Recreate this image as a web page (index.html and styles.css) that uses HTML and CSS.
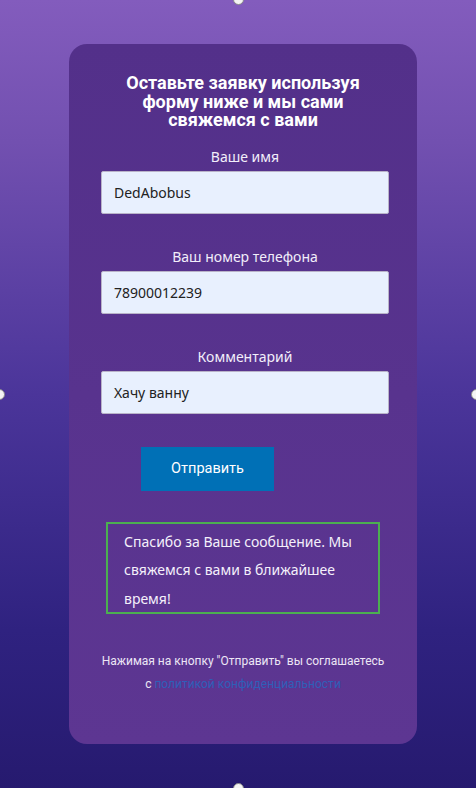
FILE: index.html
```html
<!DOCTYPE html>
<html lang="ru">
<head>
<meta charset="utf-8">
<link rel="stylesheet" href="styles.css">
</head>
<body>
<div class="page">
  <form class="card">
    <h2 class="title">Оставьте заявку используя форму ниже и мы сами свяжемся с вами</h2>
    <div class="field">
      <label class="label">Ваше имя</label>
      <div class="input">DedAbobus</div>
    </div>
    <div class="field">
      <label class="label">Ваш номер телефона</label>
      <div class="input">78900012239</div>
    </div>
    <div class="field">
      <label class="label">Комментарий</label>
      <div class="input">Хачу ванну</div>
    </div>
    <div class="btn-row"><button type="button" class="btn">Отправить</button></div>
    <div class="msg">Спасибо за Ваше сообщение. Мы свяжемся с вами в ближайшее время!</div>
    <p class="note">Нажимая на кнопку "Отправить" вы соглашаетесь<br>с <a class="link">политикой конфиденциальности</a></p>
  </form>
  <span class="handle handle-top"></span>
  <span class="handle handle-left"></span>
  <span class="handle handle-right"></span>
  <span class="handle handle-bottom"></span>
</div>
</body>
</html>
```
FILE: styles.css
```css
html, body {
  margin: 0;
  padding: 0;
}
body {
  width: 476px;
  height: 788px;
  overflow: hidden;
}
.page {
  position: relative;
  width: 476px;
  height: 788px;
  background: linear-gradient(180deg, #835cbd 0%, #7250b0 18%, #4b359a 50%, #2f2280 80%, #261a6f 100%);
  padding-top: 44px;
  box-sizing: border-box;
}
.card {
  margin-left: 69px;
  width: 348px;
  height: 700px;
  box-sizing: border-box;
  border-radius: 18px;
  background: linear-gradient(180deg, #53308a 0%, #58338e 50%, #5d3692 100%);
  padding-top: 30px;
  display: flex;
  flex-direction: column;
  align-items: center;
}
.title {
  margin: 0;
  width: 250px;
  font-family: Roboto, "Liberation Sans", sans-serif;
  font-weight: 700;
  font-size: 18px;
  line-height: 18.5px;
  color: #fff;
  text-align: center;
}
.field {
  display: flex;
  flex-direction: column;
  align-items: center;
  margin-left: 4px;
}
.label {
  font-family: "Noto Sans", "Open Sans", sans-serif;
  font-size: 14px;
  line-height: 20px;
  color: #f2eefa;
  margin-top: 17px;
  margin-bottom: 4px;
}
.field + .field .label {
  margin-top: 33px;
}
.input {
  width: 288px;
  height: 43px;
  box-sizing: border-box;
  background: #e8f0fe;
  border: 1px solid #b9b3c8;
  border-radius: 2px;
  padding: 0 12px;
  display: flex;
  align-items: center;
  font-family: "Noto Sans", "Open Sans", sans-serif;
  font-size: 14px;
  color: #222;
}
.btn-row {
  width: 288px;
  margin-left: 4px;
  display: flex;
  margin-top: 33px;
}
.btn {
  margin-left: 40px;
  width: 133px;
  height: 44px;
  border: none;
  background: #0070b6;
  color: #fff;
  font-family: Roboto, "Liberation Sans", sans-serif;
  font-size: 14.5px;
  padding: 0;
}
.msg {
  margin-top: 31px;
  margin-left: 0;
  width: 274px;
  height: 92px;
  box-sizing: border-box;
  border: 2px solid #4caf50;
  padding: 4px 12px 0 16px;
  font-family: "Noto Sans", "Open Sans", sans-serif;
  font-size: 14px;
  line-height: 28.5px;
  color: #f4f0fb;
}
.note {
  margin: 36px 0 0 0;
  font-family: Roboto, "Liberation Sans", sans-serif;
  font-size: 12px;
  line-height: 23px;
  color: #ece6f5;
  text-align: center;
}
.link {
  color: #2f5fb8;
}
.handle {
  position: absolute;
  width: 9px;
  height: 9px;
  border-radius: 50%;
  background: #f4f4f4;
  border: 1px solid #8a8a8a;
}
.handle-top { left: 233px; top: -6px; }
.handle-bottom { left: 233px; bottom: -6px; }
.handle-left { left: -6px; top: 389px; }
.handle-right { right: -6px; top: 389px; }
```
